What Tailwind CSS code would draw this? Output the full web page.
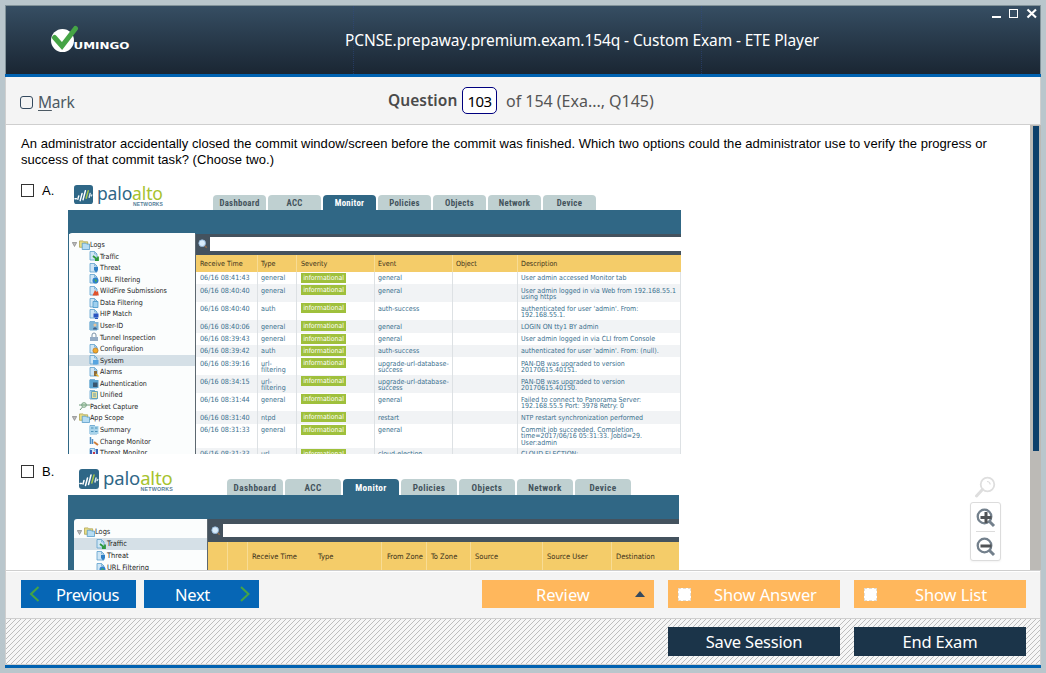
<!DOCTYPE html>
<html lang="en">
<head>
<meta charset="utf-8">
<title>ETE Player</title>
<script src="https://cdn.jsdelivr.net/npm/@tailwindcss/browser@4"></script>
</head>
<body class="w-[1046px] h-[673px] overflow-hidden bg-[#b9c6cc] p-[5px] font-['Noto_Sans',sans-serif]">
<svg class="absolute size-0">
  <defs>
    <symbol id="doc" viewBox="0 0 10 10"><path d="M1 .5h4.5L8 3v6H1z" fill="#cfe6f5" stroke="#5d9fcb" stroke-width=".8"/><path d="M5.500 .5V3H8" fill="none" stroke="#5d9fcb" stroke-width=".6"/></symbol>
    <symbol id="folder" viewBox="0 0 12 11"><path d="M.5 1h4l1 1h4v6h-9z" fill="#e9dc84" stroke="#a9a04b" stroke-width=".8"/><path d="M3.500 3.500h4l1 1h3v6h-8z" fill="#b5dcf3" stroke="#4b94c4" stroke-width=".8"/></symbol>
    <symbol id="palo" viewBox="0 0 20 20"><rect width="20" height="20" rx="3" fill="#2f6787"/><g stroke-width="1.500" stroke-linecap="round" fill="none"><path d="M1 14.500h1.500M4 15l1-3.500M6.500 16.500L8.500 9M9.500 15.500L12 6" stroke="#fff"/><path d="M12.800 14L15 6" stroke="#a6c64c"/><path d="M16 13l1-4M18.200 11.500l.5-1" stroke="#d7e5ec"/></g></symbol>
    <symbol id="lens" viewBox="0 0 12 12"><path d="M7.500 7.500l3 3" stroke="#8b6a4d" stroke-width="2"/><circle cx="5" cy="5" r="4" fill="#d9ecfb" stroke="#8fb4da"/></symbol>
    <pattern id="hatch" width="5" height="5" patternUnits="userSpaceOnUse"><path d="M0 4h1v1H0zM1 3h1v1H1zM2 2h1v1H2zM3 1h1v1H3zM4 0h1v1H4z" fill="#bdbdbd" shape-rendering="crispEdges"/></pattern>
  </defs>
</svg>
<div class="flex h-[663px] w-[1036px] flex-col">
  <header class="relative flex h-[69px] shrink-0 border border-b-0 border-[#82939a] bg-linear-to-b from-[#364e63] to-[#1a2633]">
    <div class="flex w-[339px] items-start pl-[45px] pt-[19px]">
      <svg width="82" height="30" viewBox="0 0 82 30"><circle cx="11.500" cy="15.500" r="11.500" fill="#fff"/><path d="M3.500 12.500l7.500 8.500L24.500 3.500" fill="none" stroke="#45a445" stroke-width="5" stroke-linecap="round"/><text x="22.500" y="24" font-family="DejaVu Sans" font-weight="bold" font-size="9.500" fill="#fff" textLength="56" lengthAdjust="spacingAndGlyphs">UMINGO</text></svg>
    </div>
    <h1 class="mt-[23px] whitespace-nowrap text-[15.5px] leading-[22px] tracking-[-0.1px] text-white">PCNSE.prepaway.premium.exam.154q - Custom Exam - ETE Player</h1>
    <i class="absolute left-[347px] top-0 h-[68px] border-l border-dotted border-[#2d4a8a]/50"></i>
    <i class="absolute left-[695px] top-0 h-[68px] border-l border-dotted border-[#2d4a8a]/50"></i>
    <svg class="absolute right-[2px] top-[2px]" width="46" height="12" viewBox="0 0 46 12"><path d="M0 8h9v2H0z" fill="#fff"/><rect x="17.500" y="1.500" width="8" height="8" fill="#364e63" stroke="#fff"/><path d="M35.500 1.500l8.500 8M44 1.500l-8.500 8" stroke="#fff" stroke-width="2.200"/></svg>
  </header>
  <div class="h-[3px] shrink-0 bg-[#0062b1]"></div>
  <div class="flex h-[48px] shrink-0 border-x border-b border-[#cfcfcf] bg-[#f4f4f4] text-[#555]">
    <div class="flex w-[382px] items-center gap-[5px] pl-[14px] pt-[3px] text-[#4c5963]">
      <span class="size-[13px] rounded-[3px] border border-[#34495e]"></span>
      <span class="text-[15.5px] leading-5 tracking-[-0.2px]"><u class="underline-offset-2">M</u>ark</span>
    </div>
    <div class="flex items-center whitespace-nowrap">
      <b class="w-[74px] pt-px text-[15.5px] font-semibold tracking-[0.05px] text-[#4a4a4a]">Question</b>
      <span class="flex h-[27px] w-[35px] items-center justify-center rounded-[5px] border border-[#00007f] bg-white pt-px text-[15px] tracking-[-0.5px] text-black">103</span>
      <span class="ml-[9px] pt-px text-[16px] tracking-[-0.02px]">of 154 (Exa..., Q145)</span>
    </div>
  </div>
  <main class="relative flex h-[445px] shrink-0 border-l border-[#cfcfcf] bg-white">
    <div class="h-[445px] w-[1024px] overflow-hidden pl-[15px] pt-[11px] font-['Liberation_Sans',sans-serif] text-[13px] leading-[16px] text-black">
      <p class="whitespace-nowrap tracking-[0.038px]">An administrator accidentally closed the commit window/screen before the commit was finished. Which two options could the administrator use to verify the progress or<br>success of that commit task? (Choose two.)</p>
      <div class="mt-[11px] flex h-[275px]">
        <span class="mt-[5px] size-[13px] border border-[#333]"></span><span class="ml-[8px] mt-[4px] w-[26px]">A.</span>
        <div class="mt-[4px] flex h-[271px] w-[613px] flex-col overflow-hidden font-['DejaVu_Sans_Condensed','DejaVu_Sans',sans-serif] font-stretch-condensed">
          <div class="flex h-[27px] shrink-0 items-end">
            <div class="flex h-[27px] w-[145px] gap-[4px] pl-[6px] pt-[2px]">
              <svg class="size-[19px]"><use href="#palo"/></svg>
              <div class="w-[70px] font-['Noto_Sans',sans-serif] text-[17.5px] leading-[18px] tracking-[-0.15px]"><div class="-mt-px text-[#2f6787]">palo<span class="text-[#a6c22e]">alto</span></div><div class="-mt-px w-[66px] text-right font-['Liberation_Sans'] text-[5px] leading-[6px] font-bold tracking-[0.1px] text-[#57809a]">NETWORKS</div></div>
            </div>
            <div id="tabsA" class="flex gap-[2px]"></div>
          </div>
          <div class="h-[24px] shrink-0 bg-[#306785]"></div>
          <div class="flex flex-1 border-l border-[#306785]">
            <div id="sideA" class="-mt-[1px] w-[126px] shrink-0 rounded-tl-[3px] bg-[#fbfdfd] pt-[6px] text-[7.1px] leading-[11.57px] text-[#222]"></div>
            <div class="w-[487px] border-l border-[#5d6870]">
              <div class="flex h-[21px] bg-[#44525e] pb-[4px] pt-[3px]"><svg class="mx-[2px] mt-[2px] size-[10px]"><use href="#lens"/></svg><div class="flex-1 bg-white"></div></div>
              <div class="flex h-[17px] items-center bg-[#f4cc69] text-[7.1px] text-[#3a301a]">
                <span class="w-[62px] self-stretch border-r border-[#f8dc94] pl-[4px] leading-[17px]">Receive Time</span><span class="w-[39px] self-stretch border-r border-[#f8dc94] pl-[3px] leading-[17px]">Type</span><span class="w-[78px] self-stretch border-r border-[#f8dc94] pl-[4px] leading-[17px]">Severity</span><span class="w-[78px] self-stretch border-r border-[#f8dc94] pl-[3px] leading-[17px]">Event</span><span class="w-[65px] self-stretch border-r border-[#f8dc94] pl-[3px] leading-[17px]">Object</span><span class="pl-[3px]">Description</span>
              </div>
              <div id="rows" class="text-[7.1px] leading-[6.3px] text-[#3a708e]"></div>
            </div>
          </div>
        </div>
      </div>
      <div class="mt-[3px] flex h-[120px]">
        <span class="mt-[8px] size-[13px] border border-[#333]"></span><span class="ml-[8px] mt-[7px] w-[26px]">B.</span>
        <div class="mt-[11px] flex h-[103px] w-[611px] flex-col overflow-hidden font-['DejaVu_Sans_Condensed','DejaVu_Sans',sans-serif] font-stretch-condensed">
          <div class="flex h-[27px] shrink-0 items-end">
            <div class="flex h-[27px] w-[159px] gap-[4px] pl-[11px] pt-[1px]">
              <svg class="size-[20px]"><use href="#palo"/></svg>
              <div class="w-[74px] font-['Noto_Sans',sans-serif] text-[18.5px] leading-[18px] tracking-[-0.15px]"><div class="text-[#2f6787]">palo<span class="text-[#a6c22e]">alto</span></div><div class="-mt-px w-[70px] text-right font-['Liberation_Sans'] text-[5.3px] leading-[6px] font-bold tracking-[0.2px] text-[#57809a]">NETWORKS</div></div>
            </div>
            <div id="tabsB" class="flex gap-[2px]"></div>
          </div>
          <div class="h-[24px] shrink-0 bg-[#306785]"></div>
          <div class="flex flex-1 border-l-[6px] border-[#306785] bg-[#306785]">
            <div id="sideB" class="w-[133px] shrink-0 rounded-tl-[3px] bg-[#fbfdfd] pt-[7px] text-[7.4px] leading-[12.1px] text-[#222]"></div>
            <div class="w-[472px] border-l border-[#5d6870]">
              <div class="flex h-[23px] bg-[#44525e] pb-[5px] pt-[5px]"><svg class="mx-[2.5px] mt-[2px] size-[10px]"><use href="#lens"/></svg><div class="flex-1 bg-white"></div></div>
              <div class="flex h-[29px] whitespace-nowrap bg-[#f4cc69] text-[7.5px] leading-[29px] text-[#3a301a]">
                <span class="w-[20px] border-r border-[#f8dc94]"></span><span class="w-[20px] border-r border-[#f8dc94]"></span><span class="w-[66px] pl-[4px]">Receive Time</span><span class="w-[68px] border-r border-[#f8dc94] pl-[4px]">Type</span><span class="w-[45px] border-r border-[#f8dc94] pl-[5px]">From Zone</span><span class="w-[44px] border-r border-[#f8dc94] pl-[4px]">To Zone</span><span class="w-[72px] border-r border-[#f8dc94] pl-[4px]">Source</span><span class="w-[69px] border-r border-[#f8dc94] pl-[4px]">Source User</span><span class="pl-[4px]">Destination</span>
              </div>
            </div>
          </div>
        </div>
      </div>
    </div>
    <div class="w-[11px] border-x-[3px] border-t border-r-[2px] border-[#bcbab6] bg-[#bcbab6]"><div class="h-[325px] bg-[#0d406b]"></div></div>
    <div class="absolute left-[964px] top-[351px] flex w-[31px] flex-col items-center">
      <svg class="-ml-[2px]" width="22" height="22" viewBox="0 0 22 22" fill="none" stroke="#dedede"><circle cx="13.500" cy="8.500" r="6.800" stroke-width="1.800"/><path d="M8.500 13.500L2.500 20" stroke-width="3" stroke-linecap="round"/><path d="M13 5.500c1.800 0 3 1.200 3.200 3" stroke-width="1.200"/></svg>
      <div class="mt-[4px] flex h-[59px] w-[31px] flex-col items-center rounded-[3px] border border-[#dcdcdc] bg-white pt-[5px] shadow-xs">
        <svg width="20" height="20" viewBox="0 0 20 20" fill="none" stroke="#73808c"><circle cx="8.500" cy="8.500" r="6.800" stroke-width="2.300"/><path d="M13.500 13.500l4.500 4.500" stroke-width="3"/><path d="M4.500 9.500h11M10 4v11" stroke="#505355" stroke-width="3"/></svg>
        <i class="my-[3px] h-px w-[19px] bg-[#dcdcdc]"></i>
        <svg class="mt-[2px]" width="20" height="20" viewBox="0 0 20 20" fill="none" stroke="#73808c"><circle cx="8.500" cy="8.500" r="6.800" stroke-width="2.300"/><path d="M13.500 13.500l4.500 4.500" stroke-width="3"/><path d="M4.500 9h11" stroke="#505355" stroke-width="3"/></svg>
      </div>
    </div>
  </main>
  <div class="flex h-[49px] shrink-0 border-x border-y border-[#cfcfcf] bg-[#f4f4f4] pl-[15px] pt-[9px] text-[16.5px] leading-[30px] text-white shadow-[inset_0_1px_0_white]">
    <div class="flex h-[28px] w-[115px] items-center bg-[#0666b5]"><svg class="ml-[8px] mr-[16px]" width="11" height="18" viewBox="0 0 11 18"><path d="M9.500 2L2 9l7.500 7" fill="none" stroke="#45a445" stroke-width="2"/></svg><span class="h-[28px] tracking-[-0.4px]">Previous</span></div>
    <div class="ml-[8px] flex h-[28px] w-[115px] items-center bg-[#0666b5]"><span class="ml-[31px] h-[28px] w-[64px] tracking-[-0.3px]">Next</span><svg width="12" height="18" viewBox="0 0 12 18"><path d="M2 2l7.500 7L2 16" fill="none" stroke="#45a445" stroke-width="2"/></svg></div>
    <div class="ml-[223px] flex h-[28px] w-[172px] items-center bg-[#ffb75c]"><span class="ml-[54px] h-[28px] w-[98px]">Review</span><svg width="12" height="8" viewBox="0 0 12 8"><path d="M1 7l5-6 5 6z" fill="#34495e"/></svg></div>
    <div class="ml-[14px] flex h-[28px] w-[172px] items-center bg-[#ffb75c]"><span class="ml-[10px] size-[13px] border border-dashed border-[#e3ddd5] bg-white"></span><span class="ml-[23px] h-[28px] tracking-[-0.1px]">Show Answer</span></div>
    <div class="ml-[14px] flex h-[28px] w-[172px] items-center bg-[#ffb75c]"><span class="ml-[10px] size-[13px] border border-dashed border-[#e3ddd5] bg-white"></span><span class="ml-[38px] h-[28px] tracking-[-0.1px]">Show List</span></div>
  </div>
  <div class="relative flex h-[46px] shrink-0 justify-end gap-[14px] border-x border-b border-[#cfcfcf] bg-[#f6f6f6] pr-[14px] pt-[8px] text-center text-[16.5px] leading-[30px] tracking-[-0.2px] text-white">
    <svg class="absolute inset-0 size-full"><rect width="100%" height="100%" fill="url(#hatch)"/></svg>
    <div class="relative h-[29px] w-[172px] bg-[#1b3449]">Save Session</div>
    <div class="relative h-[29px] w-[172px] bg-[#1b3449]">End Exam</div>
  </div>
  <div class="h-[3px] shrink-0 bg-[#0062b1]"></div>
</div>
<script>
const names = ['Dashboard', 'ACC', 'Monitor', 'Policies', 'Objects', 'Network', 'Device'];
const tab = (n, size) => `<span class="${size} rounded-t-[4px] text-center font-['Roboto'] font-bold ${n === 'Monitor' ? 'bg-[#306785] text-white' : 'bg-[#bfd0d1] text-[#43535c]'}">${n}</span>`;
tabsA.innerHTML = names.map(n => tab(n, 'h-[15px] w-[53px] text-[8.8px] leading-[16px] tracking-[0.3px]')).join('');
tabsB.innerHTML = names.map(n => tab(n, 'h-[16px] w-[56px] text-[9.2px] leading-[17px] tracking-[0.4px]')).join('');
const marks = {
  Traffic: '<path d="M4 5l5 4M9 5.500V9H6" stroke="#2f9a3f" stroke-width="1.800" fill="none"/>',
  Threat: '<path d="M5 4h4v3L7 9.500 5 7z" fill="#2f7fc4"/>',
  'URL Filtering': '<circle cx="6.500" cy="6.500" r="3" fill="#2d7fd0"/><path d="M5 5l3 1-1 3z" fill="#44ab52"/>',
  'WildFire Submissions': '<path d="M3.500 9.500L6 4l1.500 2L9 5l.800 4.500z" fill="#e0532d"/>',
  'Data Filtering': '<path d="M4 3.500h5v6H4z" fill="#9fd0ee" stroke="#3b8fc6" stroke-width=".7"/>',
  'HIP Match': '<path d="M4.500 4.500h5v4h-5z" fill="#2b55c0"/><path d="M6 9.500h3" stroke="#2b55c0"/>',
  'User-ID': '<path d="M.5 1h9v8h-9z" fill="#7eb4d6"/><circle cx="6" cy="4" r="1.500" fill="#e9c39a"/><path d="M4 8.500c0-3 4-3 4 0z" fill="#3f5f88"/>',
  'Tunnel Inspection': '<path d="M0 0h10v10H0z" fill="#fbfdfd"/><path d="M3 5V3a2 2 0 014 0v2" fill="none" stroke="#7c93a8"/><path d="M1 5h8v4H1z" fill="#93abc4"/>',
  Configuration: '<circle cx="6.500" cy="6.500" r="2.600" fill="#f0a92d" stroke="#a8691c" stroke-width=".6"/>',
  System: '<path d="M4 5h5.500v4.500H4z" fill="#57a5e0"/>',
  Alarms: '<path d="M5 4h3v5H5z" fill="#8a6a3a"/><path d="M7 7l2.500 2.500" stroke="#e8b93d" stroke-width="1.500"/>',
  Authentication: '<path d="M.5 1h9v8h-9z" fill="#5ba3cf"/><path d="M4 3.500h4.500V8H4z" fill="#39566f"/>',
  Unified: '<path d="M2.500 1.500h6v7h-6z" fill="#e8df9c" stroke="#4a94b8" stroke-width=".8"/><path d="M4 4h3M4 6h3" stroke="#3b8fc6" stroke-width=".8"/>',
  Summary: '<path d="M.5 1h9v8h-9z" fill="#a8d3ea"/><path d="M2 3h2.500M6 3h2.500M2 6.500h2.500M6 6.500h2.500" stroke="#4d93ba" stroke-width="1.200"/>',
  'Change Monitor': '<path d="M0 0h10v10H0z" fill="#fbfdfd"/><path d="M1.500 1v7M3.500 3v5" stroke="#4d8fc4" stroke-width="1.500"/><path d="M5 6l4 3" stroke="#cf7f3b" stroke-width="2"/>',
  'Threat Monitor': '<path d="M2 2v7M8 1v8" stroke="#3862b8" stroke-width="2"/><path d="M5 4v5" stroke="#c4354a" stroke-width="2"/>'
};
const side = (items, h, on, pad) => items.map(n => {
  if (n === 'Logs' || n === 'App Scope') return `<div class="flex ${h} items-center whitespace-nowrap pl-[3px]"><svg class="mr-[2px] shrink-0" width="5" height="5" viewBox="0 0 5 5"><path d="M.3.5h4.400L2.500 4.500z" fill="#bbb" stroke="#777" stroke-width=".6"/></svg><svg class="h-[10px] w-[11px] shrink-0"><use href="#folder"/></svg>${n}</div>`;
  if (n === 'Packet Capture') return `<div class="flex ${h} items-center whitespace-nowrap pl-[10px]"><svg class="h-[9px] w-[11px] shrink-0" viewBox="0 0 11 9"><circle cx="5" cy="3" r="2.400" fill="#cfe6d0" stroke="#6f9a7a" stroke-width=".8"/><path d="M0 3h11M3.500 5L1 8" stroke="#6f9a7a"/></svg>${n}</div>`;
  return `<div class="flex ${h} items-center whitespace-nowrap ${pad} ${n === on ? 'bg-[#d5e0e7]' : ''}"><svg class="mr-px size-[10px] shrink-0" viewBox="0 0 10 10"><use href="#doc"/>${marks[n]}</svg>${n}</div>`;
}).join('');
sideA.innerHTML = side(['Logs', ...Object.keys(marks).slice(0, 13), 'Packet Capture', 'App Scope', ...Object.keys(marks).slice(13)], 'h-[11.57px]', 'System', 'pl-[20px]');
sideB.innerHTML = side(['Logs', 'Traffic', 'Threat', 'URL Filtering'], 'h-[12.1px]', 'Traffic', 'pl-[22px]');
const data = [
  ['08:41:43', 'general', 'general', 'User admin accessed Monitor tab', 'h-[12.4px]'],
  ['08:40:40', 'general', 'general', 'User admin logged in via Web from 192.168.55.1<br>using https', 'h-[18px]'],
  ['08:40:40', 'auth', 'auth-success', "authenticated for user 'admin'. From:<br>192.168.55.1.", 'h-[17.8px]'],
  ['08:40:06', 'general', 'general', 'LOGIN ON tty1 BY admin', 'h-[12.4px]'],
  ['08:39:43', 'general', 'general', 'User admin logged in via CLI from Console', 'h-[12.4px]'],
  ['08:39:42', 'auth', 'auth-success', "authenticated for user 'admin'. From: (null).", 'h-[12.4px]'],
  ['08:39:16', 'url-<br>filtering', 'upgrade-url-database-<br>success', 'PAN-DB was upgraded to version<br>20170615.40151.', 'h-[18px]'],
  ['08:34:15', 'url-<br>filtering', 'upgrade-url-database-<br>success', 'PAN-DB was upgraded to version<br>20170615.40150.', 'h-[18px]'],
  ['08:31:44', 'general', 'general', 'Failed to connect to Panorama Server:<br>192.168.55.5 Port: 3978 Retry: 0', 'h-[18px]'],
  ['08:31:40', 'ntpd', 'restart', 'NTP restart synchronization performed', 'h-[12.4px]'],
  ['08:31:33', 'general', 'general', 'Commit job succeeded. Completion<br>time=2017/06/16 05:31:33. JobId=29.<br>User:admin', 'h-[24px]'],
  ['08:31:33', 'url', 'cloud-election', 'CLOUD ELECTION:', 'h-[12.4px]']
];
rows.innerHTML = data.map(([t, ty, ev, d, h], i) => `<div class="flex ${h} whitespace-nowrap ${i % 2 ? 'bg-[#f1f3f5]' : 'bg-white'}"><span class="w-[62px] border-r border-[#dde1e4] pl-[4px] pt-[3.4px] text-[7.2px]">06/16 ${t}</span><span class="w-[39px] border-r border-[#dde1e4] pl-[3px] pt-[3.4px]">${ty}</span><span class="w-[78px] border-r border-[#dde1e4] pl-[4px] pt-[1px]"><b class="block h-[10px] w-[45px] bg-[#9fc03c] text-center text-[6.8px] font-normal leading-[10px] text-white">informational</b></span><span class="w-[78px] border-r border-[#dde1e4] pl-[3px] pt-[3.4px] text-[7px]">${ev}</span><span class="w-[65px] border-r border-[#dde1e4]"></span><span class="w-[163px] border-r border-[#dde1e4] pl-[3px] pt-[3.4px] text-[7px]">${d}</span></div>`).join('');
</script>
</body>
</html>
